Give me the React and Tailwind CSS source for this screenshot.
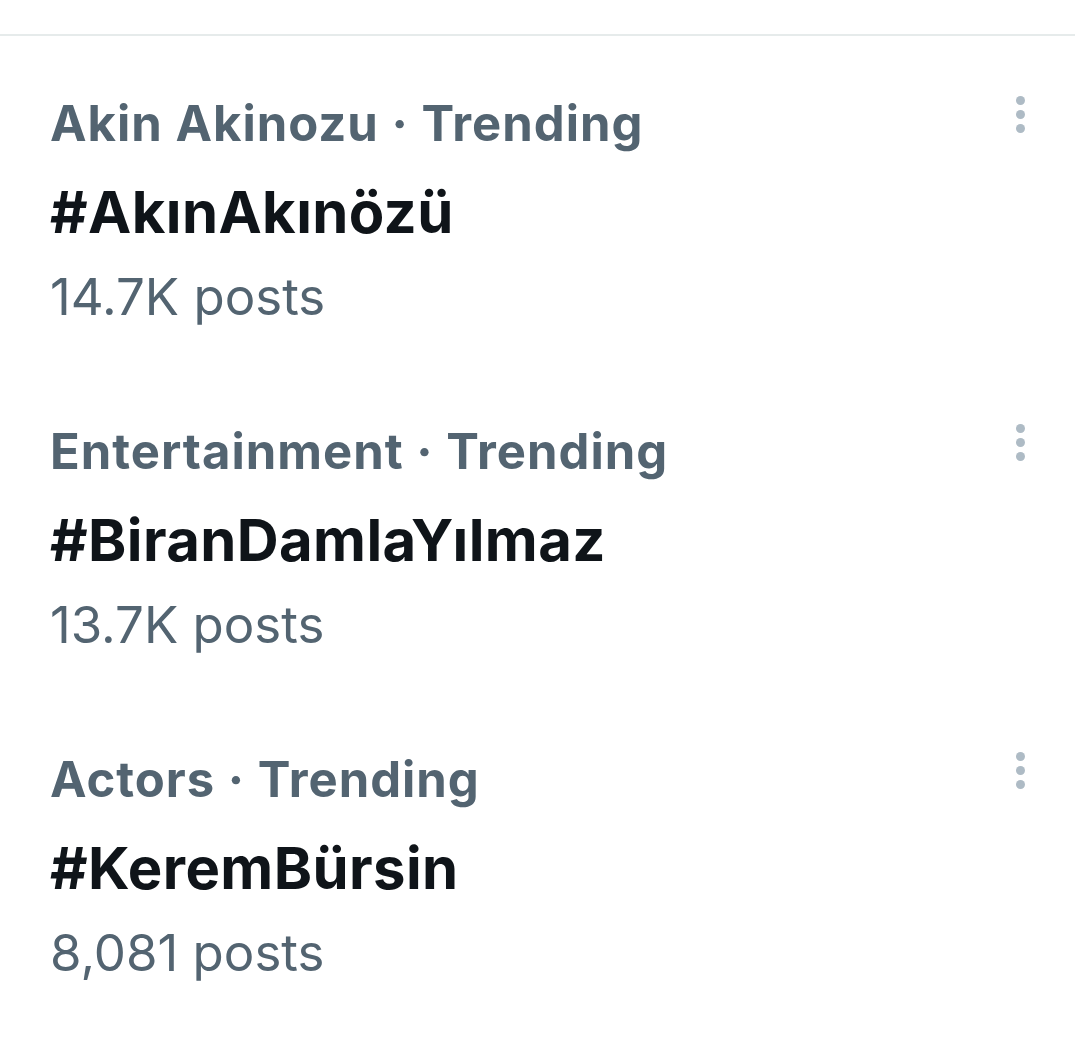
import React from "react";

const trends = [
  { cat: "Akin Akinozu · Trending", tag: "#AkınAkınözü", posts: "14.7K posts" },
  { cat: "Entertainment · Trending", tag: "#BiranDamlaYılmaz", posts: "13.7K posts" },
  { cat: "Actors · Trending", tag: "#KeremBürsin", posts: "8,081 posts" },
];

function Dots() {
  return (
    <div className="flex flex-col items-center gap-[5px]">
      <span className="block w-[9px] h-[9px] rounded-full bg-[#aebbc5]" />
      <span className="block w-[9px] h-[9px] rounded-full bg-[#aebbc5]" />
      <span className="block w-[9px] h-[9px] rounded-full bg-[#aebbc5]" />
    </div>
  );
}

export default function App() {
  return (
    <div className="w-[1075px] h-[1044px] bg-white overflow-hidden" style={{ fontFamily: "Inter, 'Noto Sans', sans-serif" }}>
      <div className="h-[34px]" />
      <div className="h-[2px] bg-[#e6ebeb]" />
      <div className="flex flex-col pt-[60px]">
        {trends.map((t) => (
          <div key={t.tag} className="flex justify-between pl-[50px] pr-[50px] h-[328px]">
            <div className="flex flex-col">
              <div className="text-[49px] leading-[56px] font-bold text-[#536471] tracking-[1px]">{t.cat}</div>
              <div className="mt-[30px] text-[58px] leading-[60px] font-bold text-[#0f1419] tracking-[0.4px]">{t.tag}</div>
              <div className="mt-[25px] text-[51px] leading-[60px] font-normal text-[#536471]">{t.posts}</div>
            </div>
            <Dots />
          </div>
        ))}
      </div>
    </div>
  );
}
